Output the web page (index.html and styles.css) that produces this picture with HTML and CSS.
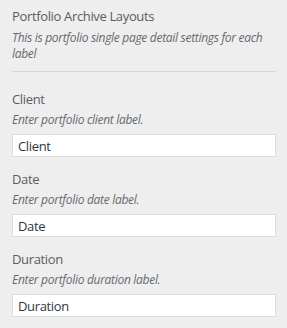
FILE: index.html
```
<!DOCTYPE html>
<html>
<head>
<meta charset="utf-8">
<link rel="stylesheet" href="styles.css">
</head>
<body>
<div class="panel">
  <div class="section-head">
    <h3 class="section-title">Portfolio Archive Layouts</h3>
    <p class="desc">This is portfolio single page detail settings for each label</p>
  </div>
  <div class="control">
    <label class="control-title" for="c1">Client</label>
    <p class="desc">Enter portfolio client label.</p>
    <input id="c1" class="text-input" type="text" value="Client">
  </div>
  <div class="control">
    <label class="control-title" for="c2">Date</label>
    <p class="desc">Enter portfolio date label.</p>
    <input id="c2" class="text-input" type="text" value="Date">
  </div>
  <div class="control">
    <label class="control-title" for="c3">Duration</label>
    <p class="desc">Enter portfolio duration label.</p>
    <input id="c3" class="text-input" type="text" value="Duration">
  </div>
</div>
</body>
</html>
```
FILE: styles.css
```
html, body {
  margin: 0;
  padding: 0;
  background: #eeeeee;
}
body {
  font-family: "Open Sans", "Noto Sans", sans-serif;
  color: #555d66;
}
.panel {
  padding: 4px 11px 0 12px;
}
.section-head {
  border-bottom: 1px solid #d6d6d6;
  padding-bottom: 9px;
  margin-bottom: 17px;
}
.section-title {
  margin: 0;
  font-size: 13px;
  font-weight: 400;
  line-height: 24px;
  letter-spacing: -0.35px;
  color: #555d66;
}
.desc {
  margin: 2px 0 0;
  font-size: 12px;
  font-style: italic;
  line-height: 16px;
  letter-spacing: -0.3px;
  color: #666a70;
}
.control {
  display: flex;
  flex-direction: column;
  margin-bottom: 12px;
}
.control-title {
  font-size: 13px;
  line-height: 20px;
  letter-spacing: -0.35px;
  color: #555d66;
}
.control .desc {
  margin: 3px 0 6px;
}
.text-input {
  box-sizing: border-box;
  width: 100%;
  height: 23px;
  margin: 0;
  padding: 0 5px;
  border: 1px solid #dddddd;
  background: #fff;
  font-family: "Open Sans", "Noto Sans", sans-serif;
  font-size: 13px;
  letter-spacing: -0.35px;
  color: #32373c;
  outline: none;
}
```
